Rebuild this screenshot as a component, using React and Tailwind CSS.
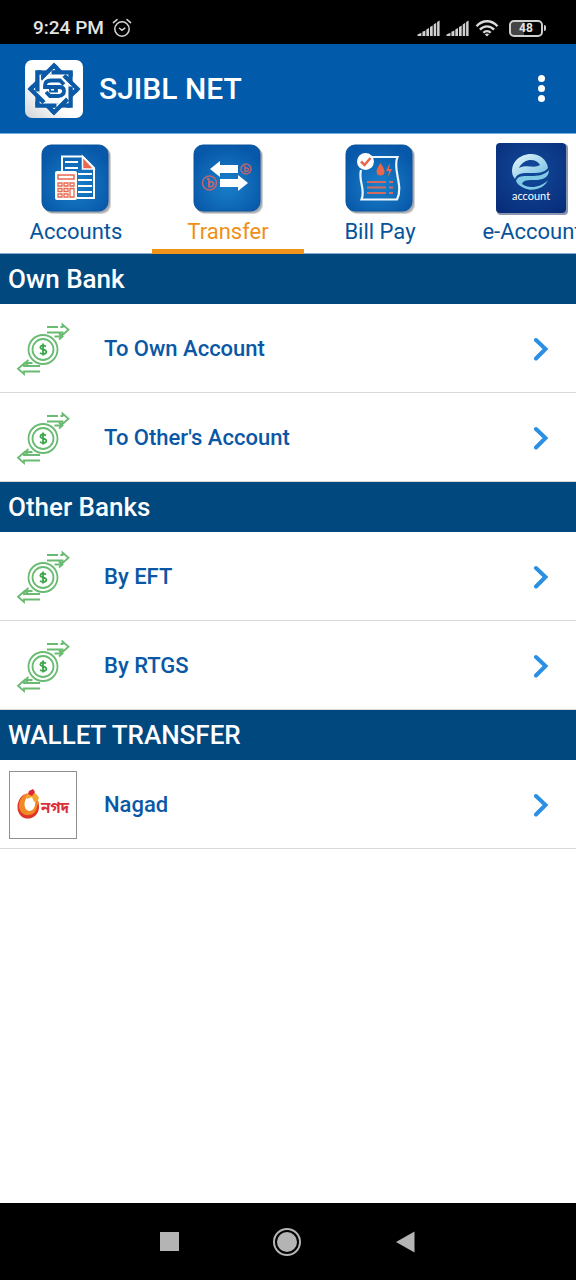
import React from "react";

const spokes = [0, 45, 90, 135, 180, 225, 270, 315];

function AlarmIcon() {
  return (
    <svg viewBox="0 0 20 20" className="size-5" fill="none" stroke="#d6d6d6" strokeWidth="1.5" strokeLinecap="round" aria-hidden="true">
      <circle cx="10" cy="11" r="7.2" />
      <path d="M1.4 4.6 5 1.6M18.6 4.6 15 1.6M7.5 10.2 10 12.3l2.8-2.2" />
    </svg>
  );
}

function SignalIcon() {
  return (
    <svg viewBox="0 0 23 17" className="h-[17px] w-[23px]" fill="#cfcfcf" aria-hidden="true">
      <path d="M.5 14.5 4.400 12.800v3.200H.5zM5.4 11.800l3-1.400V16h-3zM9.3 9.500 12 8v8H9.300zM13 7l2.700-1.600V16H13zM16.700 4.400l2.500-1.600V16h-2.500zM20.100 2l2.500-1.600V16h-2.500z" />
    </svg>
  );
}

function WifiIcon() {
  return (
    <svg viewBox="0 0 24 18" className="h-[18px] w-6" fill="none" stroke="#dadada" strokeWidth="2.3" aria-hidden="true">
      <path d="M1.5 7.2C7.6.6 16.400.6 22.500 7.2M4.900 10.600c4.200-4.300 10-4.300 14.200 0M8.300 13.800c2.200-2.200 5.200-2.200 7.400 0" />
      <path d="M9.800 15.300 12 17.500l2.200-2.200Q12 13.600 9.800 15.300Z" fill="#dadada" stroke="none" />
    </svg>
  );
}

function BankLogo() {
  return (
    <svg viewBox="-29 -29 58 58" className="size-[58px]" fill="none" aria-hidden="true">
      <defs>
        <linearGradient id="tile" x1="0" y1="1" x2="0.6" y2="0.3">
          <stop offset="0" stopColor="#cfd2d6" />
          <stop offset="0.6" stopColor="#fff" />
        </linearGradient>
      </defs>
      <rect x="-29" y="-29" width="58" height="58" rx="7" fill="url(#tile)" />
      {spokes.map((a) => (
        <path key={a} transform={`rotate(${a})`} d="M0-23.500 14-9.500" stroke="#0c5aa6" strokeWidth="4" />
      ))}
      {spokes.map((a) => (
        <g key={a} transform={`rotate(${a})`}>
          <path d="M-1-20.500-13-8.500" stroke="#fff" strokeWidth="4.500" />
          <path d="M3-20.500 0-23.500-13.500-10" stroke="#0c5aa6" strokeWidth="4.300" />
        </g>
      ))}
      <circle r="11.500" fill="#fff" />
      <path d="M10-4.500 6-8.500H-3q-6 0-6 5V-2H5q5 0 5 4t-5 5H-4l-4-4" stroke="#0c5aa6" strokeWidth="3.800" />
      <path d="M-4-1.500v4h7v-2H0" stroke="#0c5aa6" strokeWidth="1.800" />
    </svg>
  );
}

function Tile({ children }) {
  return (
    <svg viewBox="0 0 72 72" className="size-[72px]" fill="none" aria-hidden="true">
      <defs>
        <radialGradient id="blue" cx="0.5" cy="0.6" r="0.6">
          <stop offset="0" stopColor="#1a80cb" />
          <stop offset="1" stopColor="#0758a8" />
        </radialGradient>
      </defs>
      <rect x="4" y="4" width="67" height="67" rx="9" fill="#d4d4d6" />
      <rect x="3" y="3" width="67" height="67" rx="9" fill="#a5a9b0" />
      <rect x="2" y="2" width="66" height="66" rx="9" fill="url(#blue)" stroke="#0b559e" />
      {children}
    </svg>
  );
}

function AccountsIcon() {
  return (
    <Tile>
      <path d="M22 29V13.500h20.500L54 25v30H37" stroke="#fff" strokeWidth="2" />
      <path d="M42.500 13.500V26H54z" fill="#e8674d" stroke="#fff" strokeWidth="1.500" />
      <path d="M25 19h13M25 25h13M38 31h14M38 37h14M38 43h14M38 49h14" stroke="#fff" strokeWidth="2" />
      <rect x="15" y="28" width="22" height="29" rx="2" fill="#fff" />
      <rect x="18" y="32" width="16" height="4" stroke="#e8674d" strokeWidth="1.500" />
      <path d="M18 40h4v3h-4zM24 40h4v3h-4zM30 40h4v3h-4zM18 45.500h4v3h-4zM24 45.500h4v3h-4zM18 51h4v3h-4zM24 51h4v3h-4zM30 45.500h4V54h-4z" stroke="#e8674d" strokeWidth="1.300" />
    </Tile>
  );
}

function TransferIcon() {
  return (
    <Tile>
      <path d="m18 26 10-8v4h18v8H28v4zM56 40l-10-8v4H28v8h18v4z" fill="#fff" />
      <g stroke="#b96776" strokeWidth="1.500">
        <circle cx="17.500" cy="40" r="7" />
        <path d="m15 35.500 2 .8v7.500q5 .2 4.500-3.500-1-2.500-4.500-1" strokeWidth="2" />
        <circle cx="54" cy="26" r="5" />
        <path d="m52 23 1 .5v5q4 0 3.500-2.500-1-1.500-3.500-.5" />
      </g>
    </Tile>
  );
}

function BillIcon() {
  return (
    <Tile>
      <path d="M26 14h27.500C48 26 60 43 53 56.500H17.500C22 47 14 38 17 27" stroke="#eef7ff" strokeWidth="2.200" />
      <circle cx="21.500" cy="18.500" r="8.500" fill="#fff" />
      <path d="m17 18.500 3.500 3.500 6-7" stroke="#e8674d" strokeWidth="2.500" />
      <path d="M36.500 20q-4 6-4 8.500a4 4 0 0 0 8 0q0-2.500-4-8.500zM46 20l-4 8h3l-1 6 4-8h-3z" fill="#e8674d" />
      <path d="M23 39h19M45 39h4M23 44.500h19M45 44.500h4M23 50h19M45 50h4" stroke="#d46a62" strokeWidth="2" />
    </Tile>
  );
}

function EAccountIcon() {
  return (
    <svg viewBox="0 0 72 72" className="size-[72px]" aria-hidden="true">
      <defs>
        <radialGradient id="navy" cx="0.5" cy="0.4" r="0.7">
          <stop offset="0" stopColor="#124a9c" />
          <stop offset="1" stopColor="#082e7a" />
        </radialGradient>
        <linearGradient id="wave" x1="0" y1="0" x2="1" y2="1">
          <stop offset="0" stopColor="#e8f8fd" />
          <stop offset="1" stopColor="#6dbcdf" />
        </linearGradient>
      </defs>
      <rect x="1" y="1" width="71" height="71" rx="4" fill="#8b95ad" />
      <rect width="70" height="70" rx="4" fill="url(#navy)" />
      <path d="M17 33C13 21 23 11 35 11c9 0 16 6 17 14-4 5-10 5-18 5-7 0-13 0-15 6zM23 25c9-4 15 1 21-3-4-7-16-7-21 3z" fill="url(#wave)" />
      <path d="M20 38c2-6 8-5 15-5 7 0 14-1 18-6 0 8-7 10-14 10-7 0-12 0-13 4 6 5 19 4 26-4-4 9-16 12-24 8-4-2-7-4-8-7z" fill="#80cae5" />
      <text x="35" y="57" textAnchor="middle" fill="#fff" fontFamily="Lato, sans-serif" fontSize="11">account</text>
    </svg>
  );
}

function MoneyIcon() {
  return (
    <svg viewBox="0 0 54 54" className="size-[54px]" fill="none" stroke="#68bb70" strokeWidth="1.800" aria-hidden="true">
      <circle cx="27" cy="27.500" r="14.500" />
      <circle cx="27" cy="27.500" r="10.500" />
      <path d="M31 5h11M44.500 5h2V2.500l6 5.200-6 5.300v-2.500H31M38.500 14.500H46M43 11.500l3.500 3-3.500 3" />
      <path d="M24 49.500H8V52l-6-5.200 6-5.300V44h16M16.500 41H9M12.500 38 9 41l3.500 3" />
      <path d="M30 24.500q-3-2-5-.5-2 2.500 2 3.500 4.500 1 3 3.500-2.500 2-6 0M27 21.500v12" stroke="#3da64b" />
    </svg>
  );
}

function NagadLogo() {
  return (
    <span className="flex size-[68px] items-center justify-center border border-[#8f8f8f] bg-white">
      <svg viewBox="0 0 24 34" className="h-[34px] w-6 shrink-0" aria-hidden="true">
        <path d="M8 6C0 10-2 22 4 28c7 6 18 1 18-9 0-4-1-6-2-7 0 8-2 13-8 14C5 26 3 15 8 6z" fill="#df3528" />
        <path d="M10 5C1 10 0 20 5 25c6 5 15 1 15-7l2-4-4-4c1 8-1 13-6 13C6 22 6 12 12 7z" fill="#f18a25" />
        <path d="m13 4-4 4 1 3 5-2 2 5 5-3-1-3-4-4z" fill="#f6a52c" />
        <path d="m12 3 4-2 2 3-3 4-4-2z" fill="#db2737" />
      </svg>
      <span lang="bn" className="pt-2 font-['Noto_Sans_Bengali','Noto_Sans',sans-serif] text-[15px] leading-5 font-bold text-[#d9303b]">নগদ</span>
    </span>
  );
}

function Chevron() {
  return (
    <svg viewBox="0 0 16 24" className="h-6 w-4" fill="none" stroke="#2b90e3" strokeWidth="4" strokeLinecap="round" aria-hidden="true">
      <path d="m3 3 9.500 9L3 21.500" />
    </svg>
  );
}

const tabs = [
  { label: "Accounts", Icon: AccountsIcon },
  { label: "Transfer", Icon: TransferIcon, active: true },
  { label: "Bill Pay", Icon: BillIcon },
  { label: "e-Account", Icon: EAccountIcon },
];

const sections = [
  { title: "Own Bank", items: [{ label: "To Own Account", Icon: MoneyIcon }, { label: "To Other's Account", Icon: MoneyIcon }] },
  { title: "Other Banks", items: [{ label: "By EFT", Icon: MoneyIcon }, { label: "By RTGS", Icon: MoneyIcon }] },
  { title: "WALLET TRANSFER", items: [{ label: "Nagad", Icon: NagadLogo }] },
];

export default function App() {
  return (
    <div className="flex min-h-screen flex-col bg-white font-[Roboto,sans-serif]">
      <div className="flex h-11 items-center bg-black pt-4 pr-[30px] pb-1 pl-[33px] text-[#e4e4e4]">
        <span className="text-[19px] leading-6 font-medium">9:24 PM</span>
        <span className="ml-2"><AlarmIcon /></span>
        <span className="ml-auto flex items-center gap-[6px]">
          <SignalIcon />
          <SignalIcon />
          <WifiIcon />
          <span className="ml-1 flex items-center gap-px">
            <span className="flex h-[17px] w-[34px] items-center justify-center rounded-[5px] border-2 border-[#cfcfcf] bg-linear-to-r from-[#444] from-45% to-black to-45% text-xs leading-3 font-bold">48</span>
            <span className="h-[6px] w-[2px] rounded-r bg-[#cfcfcf]" />
          </span>
        </span>
      </div>

      <header className="flex h-[90px] items-center border-b border-[#77aede] bg-[#015aaa] pr-[25px] pl-[25px]">
        <BankLogo />
        <h1 className="ml-4 text-[30px] leading-9 font-medium text-white">SJIBL NET</h1>
        <button type="button" aria-label="More options" className="ml-auto flex w-5 flex-col items-center gap-[3px] py-2">
          <span className="size-[7px] rounded-full bg-white" />
          <span className="size-[7px] rounded-full bg-white" />
          <span className="size-[7px] rounded-full bg-white" />
        </button>
      </header>

      <nav className="flex h-[120px] overflow-hidden">
        {tabs.map(({ label, Icon, active }) => (
          <button
            key={label}
            type="button"
            aria-current={active ? "page" : undefined}
            className={
              active
                ? "flex w-[152px] shrink-0 flex-col items-center border-b-[5px] border-[#f2941b] pt-[9px] text-[#ef8f16]"
                : "flex w-[152px] shrink-0 flex-col items-center border-b border-[#86add0] pt-[9px] text-[#07549b]"
            }
          >
            <Icon />
            <span className="mt-[5px] text-[22px] leading-6 whitespace-nowrap">{label}</span>
          </button>
        ))}
      </nav>

      <main className="flex-1">
        {sections.map(({ title, items }) => (
          <section key={title}>
            <h2 className="flex h-[50px] items-center bg-[#01487f] px-2 text-[26px] leading-8 font-medium text-white">{title}</h2>
            <ul>
              {items.map(({ label, Icon }) => (
                <li key={label} className="border-b border-[#d9d9d9]">
                  <button type="button" className="flex h-[88px] w-full items-center pt-px pr-[27px] text-left">
                    <span className="flex w-[86px] shrink-0 justify-center"><Icon /></span>
                    <span className="ml-[18px] flex-1 text-[22px] leading-7 font-medium text-[#0a58a5]">{label}</span>
                    <Chevron />
                  </button>
                </li>
              ))}
            </ul>
          </section>
        ))}
      </main>

      <footer className="flex h-[77px] items-center justify-center bg-black pr-[2px]">
        <button type="button" aria-label="Recent apps" className="flex w-[118px] justify-center">
          <span className="size-[19px] bg-[#b4b4b4]" />
        </button>
        <button type="button" aria-label="Home" className="flex w-[118px] justify-center">
          <span className="flex size-7 items-center justify-center rounded-full border-2 border-[#b4b4b4]">
            <span className="size-5 rounded-full bg-[#b4b4b4]" />
          </span>
        </button>
        <button type="button" aria-label="Back" className="flex w-[118px] justify-center">
          <svg viewBox="0 0 19 22" className="h-[22px] w-[19px]" aria-hidden="true">
            <path d="M0 11 18.500.5v21z" fill="#b4b4b4" />
          </svg>
        </button>
      </footer>
    </div>
  );
}
